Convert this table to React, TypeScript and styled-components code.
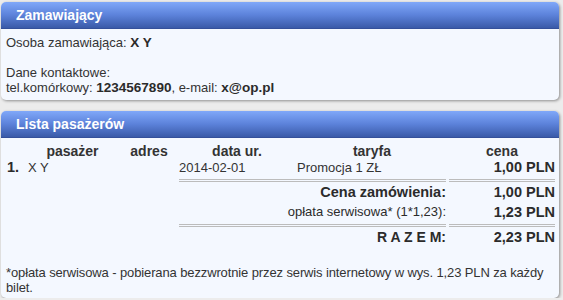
import React from 'react'
import styled, { createGlobalStyle } from 'styled-components'

const GlobalStyle = createGlobalStyle`
  html, body {
    margin: 0;
    padding: 0;
    background: #ececec;
  }
  body {
    font-family: 'Liberation Sans', Arial, sans-serif;
    font-size: 13px;
    color: #333;
  }
`

const Page = styled.div`
  display: flex;
  flex-direction: column;
  gap: 11px;
  padding: 2px 0 0 1px;
  width: 558px;
`

const Panel = styled.section`
  background: #f4f8ff;
  border-radius: 5px;
  box-shadow: 1px 1px 3px rgba(0, 0, 0, 0.4);
  overflow: hidden;
`

const PanelTitle = styled.h2`
  margin: 0;
  height: 27px;
  line-height: 26px;
  padding-left: 15px;
  font-size: 14px;
  font-weight: bold;
  color: #fff;
  background: linear-gradient(to bottom, #80a8f9 0%, #5c82da 50%, #3a5aa8 100%);
  border-bottom: 1px solid #34509a;
  box-sizing: border-box;
`

const Body = styled.div`
  padding: 6px 5px 5px;
  line-height: 15px;
`

const Line = styled.div`
  min-height: 15px;
`

const Strong = styled.b`
  font-size: 13.5px;
  color: #2b2b2b;
`

const Passengers = styled.div`
  display: grid;
  grid-template-columns: 19px 95px 58px 118px 152px 108px;
  padding: 5px 3px 0 5px;
`

const Head = styled.div`
  font-weight: bold;
  font-size: 14px;
  line-height: 16px;
  text-align: center;
  color: #333;
`

const Cell = styled.div<{ $align?: 'left' | 'right'; $bold?: boolean; $indent?: number }>`
  text-align: ${(p) => p.$align ?? 'left'};
  font-weight: ${(p) => (p.$bold ? 'bold' : 'normal')};
  font-size: ${(p) => (p.$bold ? '14.5px' : '13px')};
  line-height: 17px;
  color: ${(p) => (p.$bold ? '#2b2b2b' : '#333')};
  padding: 0 1px 0 ${(p) => p.$indent ?? 1}px;
`

const Rule = styled.div<{ $span: string; $top: number; $right: number }>`
  grid-column: ${(p) => p.$span};
  height: 3px;
  border-top: 1px solid #bcbcbc;
  border-bottom: 1px solid #bcbcbc;
  box-sizing: border-box;
  margin: ${(p) => p.$top}px ${(p) => p.$right}px 0 1px;
`

const SumLabel = styled.div<{ $bold?: boolean; $size?: number }>`
  grid-column: 4 / 6;
  text-align: right;
  font-weight: ${(p) => (p.$bold ? 'bold' : 'normal')};
  font-size: ${(p) => p.$size ?? 13}px;
  line-height: 20px;
  color: #2b2b2b;
  padding-right: 2px;
`

const SumValue = styled.div`
  grid-column: 6;
  text-align: right;
  font-weight: bold;
  font-size: 14.5px;
  line-height: 20px;
  color: #2b2b2b;
  padding-right: 1px;
`

const Footnote = styled.p`
  margin: 18px 0 0;
  padding: 0 2px 3px 5px;
  line-height: 15px;
  letter-spacing: -0.12px;
`

export default function App() {
  return (
    <>
      <GlobalStyle />
      <Page>
        <Panel>
          <PanelTitle>Zamawiający</PanelTitle>
          <Body>
            <Line>
              Osoba zamawiająca: <Strong>X Y</Strong>
            </Line>
            <Line />
            <Line>Dane kontaktowe:</Line>
            <Line>
              tel.komórkowy: <Strong>1234567890</Strong>, e-mail: <Strong>x@op.pl</Strong>
            </Line>
          </Body>
        </Panel>

        <Panel>
          <PanelTitle>Lista pasażerów</PanelTitle>
          <Passengers>
            <Head />
            <Head>pasażer</Head>
            <Head>adres</Head>
            <Head>data ur.</Head>
            <Head>taryfa</Head>
            <Head>cena</Head>

            <Cell $bold>1.</Cell>
            <Cell $indent={3}>X Y</Cell>
            <Cell />
            <Cell>2014-02-01</Cell>
            <Cell>Promocja 1 ZŁ</Cell>
            <Cell $align="right" $bold>1,00 PLN</Cell>

            <Rule $span="4 / 6" $top={3} $right={2} />
            <Rule $span="6" $top={3} $right={1} />

            <SumLabel $bold $size={14.5}>Cena zamówienia:</SumLabel>
            <SumValue>1,00 PLN</SumValue>
            <SumLabel>opłata serwisowa* (1*1,23):</SumLabel>
            <SumValue>1,23 PLN</SumValue>

            <Rule $span="4 / 6" $top={2} $right={2} />
            <Rule $span="6" $top={2} $right={1} />

            <SumLabel $bold $size={14}>R A Z E M:</SumLabel>
            <SumValue>2,23 PLN</SumValue>
          </Passengers>
          <Footnote>
            *opłata serwisowa - pobierana bezzwrotnie przez serwis internetowy w wys. 1,23 PLN za każdy
            bilet.
          </Footnote>
        </Panel>
      </Page>
    </>
  )
}
